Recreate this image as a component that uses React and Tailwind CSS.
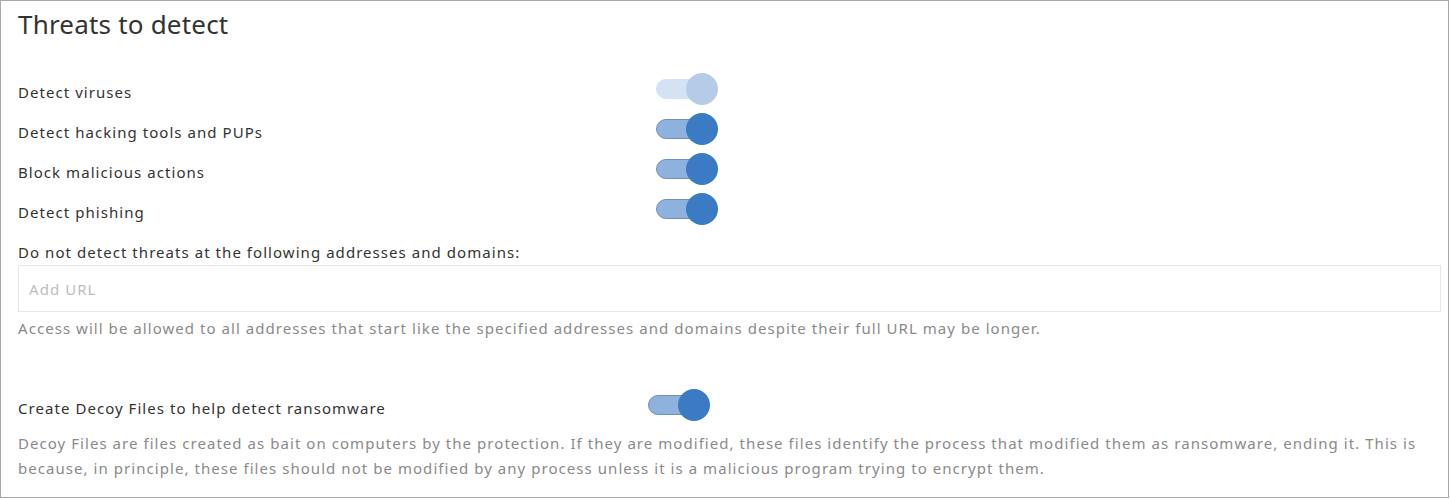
import React, { useState } from 'react';

const Toggle = ({ checked, disabled, onChange }) => {
    return (
        <button
            type="button"
            onClick={() => !disabled && onChange(!checked)}
            className={`relative w-[62px] h-8 -mt-[6px] shrink-0 ${disabled ? 'cursor-default' : 'cursor-pointer'}`}
        >
            <span
                className={`absolute left-0 top-[6px] w-[50px] h-5 rounded-full border ${
                    disabled
                        ? 'bg-[#d4e2f3] border-[#d4e2f3]'
                        : 'bg-[#8fb1dd] border-[#6d8fbd]'
                }`}
            ></span>
            <span
                className={`absolute top-0 w-8 h-8 rounded-full transition-all ${
                    checked ? 'right-0' : 'right-[30px]'
                } ${disabled ? 'bg-[#b4cce8]' : 'bg-[#3b7bc3]'}`}
            ></span>
        </button>
    );
};

const App = () => {
    const [settings, setSettings] = useState({
        viruses: true,
        hacking: true,
        malicious: true,
        phishing: true,
        decoy: true,
    });
    const [url, setUrl] = useState('');

    const rows = [
        { key: 'viruses', label: 'Detect viruses', disabled: true },
        { key: 'hacking', label: 'Detect hacking tools and PUPs' },
        { key: 'malicious', label: 'Block malicious actions' },
        { key: 'phishing', label: 'Detect phishing' },
    ];

    const setValue = (key, value) => setSettings({ ...settings, [key]: value });

    return (
        <div className="w-[1449px] h-[498px] bg-white border border-[#a9a9a9] pl-[17px] pr-[7px] font-['Noto_Sans',sans-serif] text-[#333] text-[15px] tracking-[1.05px]">
            <h2 className="text-[26px] leading-[32px] pt-[7px] tracking-[0.2px] text-[#333]">Threats to detect</h2>

            <div className="mt-[32px] flex flex-col">
                {rows.map((row) => (
                    <div key={row.key} className="flex items-center h-10">
                        <span className="w-[638px]">{row.label}</span>
                        <Toggle
                            checked={settings[row.key]}
                            disabled={row.disabled}
                            onChange={(v) => setValue(row.key, v)}
                        />
                    </div>
                ))}
            </div>

            <p className="mt-[9px] leading-[22px]">
                Do not detect threats at the following addresses and domains:
            </p>
            <input
                type="text"
                value={url}
                onChange={(e) => setUrl(e.target.value)}
                placeholder="Add URL"
                className="mt-[2px] w-full h-[47px] border border-[#e6e6e6] px-[10px] text-[15px] tracking-[1.05px] text-[#333] placeholder:text-[#bdbdbd] outline-none"
            />
            <p className="mt-[4px] leading-[25px] text-[#8a8a8a]">
                Access will be allowed to all addresses that start like the specified addresses and domains despite their full URL may be longer.
            </p>

            <div className="mt-[47px] flex items-center h-10">
                <span className="w-[630px]">Create Decoy Files to help detect ransomware</span>
                <Toggle checked={settings.decoy} onChange={(v) => setValue('decoy', v)} />
            </div>
            <p className="mt-[3px] leading-[25px] text-[#8a8a8a]">
                Decoy Files are files created as bait on computers by the protection. If they are modified, these files identify the process that modified them as ransomware, ending it. This is because, in principle, these files should not be modified by any process unless it is a malicious program trying to encrypt them.
            </p>
        </div>
    );
};

export default App;
